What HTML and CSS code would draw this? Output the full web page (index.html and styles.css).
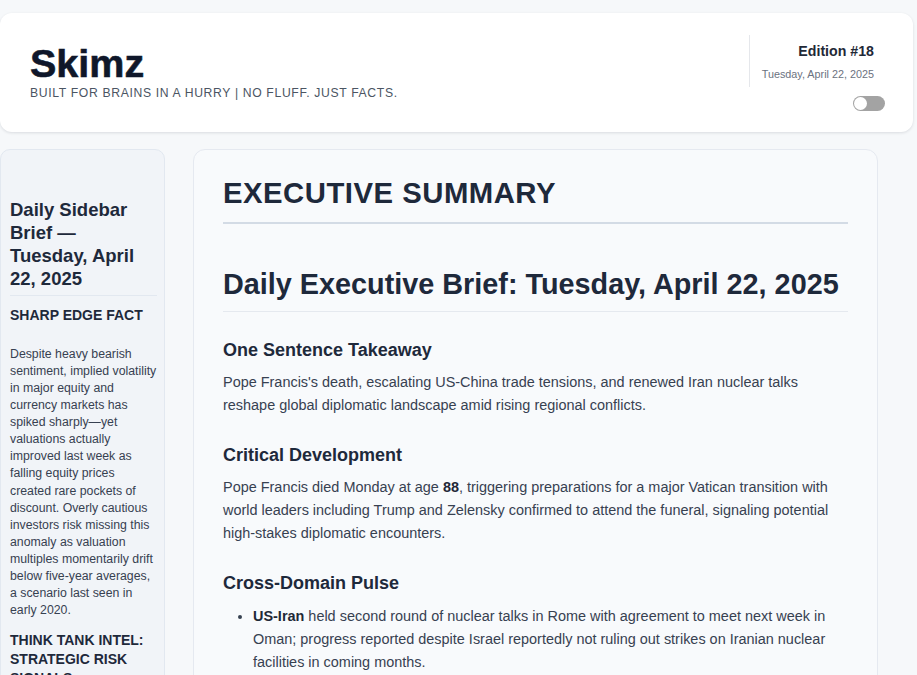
FILE: index.html
```html
<!DOCTYPE html>
<html lang="en">
<head>
    <meta charset="UTF-8">
    <meta name="viewport" content="width=device-width, initial-scale=1.0">
    <title>Skimz - Edition #18</title>
    <link rel="stylesheet" href="styles.css">
</head>
<body>
    <div class="page">
        <header class="masthead">
            <div class="brand">
                <h1 class="logo">Skimz</h1>
                <p class="tagline">Built for brains in a hurry | No fluff. Just facts.</p>
            </div>
            <div class="issue">
                <div class="issue-info">
                    <div class="edition">Edition #18</div>
                    <div class="issue-date">Tuesday, April 22, 2025</div>
                </div>
                <label class="toggle">
                    <input type="checkbox">
                    <span class="knob"></span>
                </label>
            </div>
        </header>

        <div class="layout">
            <aside class="sidebar">
                <h2 class="sidebar-title">Daily Sidebar Brief — Tuesday, April 22, 2025</h2>
                <h3 class="sidebar-label">Sharp Edge Fact</h3>
                <p class="sidebar-text">Despite heavy bearish sentiment, implied volatility in major equity and currency markets has spiked sharply—yet valuations actually improved last week as falling equity prices created rare pockets of discount. Overly cautious investors risk missing this anomaly as valuation multiples momentarily drift below five-year averages, a scenario last seen in early 2020.</p>
                <h3 class="sidebar-label">Think Tank Intel: Strategic Risk Signals</h3>
            </aside>

            <main class="summary">
                <h2 class="summary-title">Executive Summary</h2>
                <h1 class="brief-title">Daily Executive Brief: Tuesday, April 22, 2025</h1>

                <h3>One Sentence Takeaway</h3>
                <p>Pope Francis's death, escalating US-China trade tensions, and renewed Iran nuclear talks reshape global diplomatic landscape amid rising regional conflicts.</p>

                <h3>Critical Development</h3>
                <p>Pope Francis died Monday at age <strong>88</strong>, triggering preparations for a major Vatican transition with world leaders including Trump and Zelensky confirmed to attend the funeral, signaling potential high-stakes diplomatic encounters.</p>

                <h3>Cross-Domain Pulse</h3>
                <ul>
                    <li><strong>US-Iran</strong> held second round of nuclear talks in Rome with agreement to meet next week in Oman; progress reported despite Israel reportedly not ruling out strikes on Iranian nuclear facilities in coming months.</li>
                </ul>
            </main>
        </div>
    </div>
</body>
</html>
```

FILE: styles.css
```css
body {
    margin: 0;
    background-color: #f6f8fa;
    font-family: "Liberation Sans", Arial, sans-serif;
    color: #374151;
}
.page {
    padding: 13px 4px 0 0;
}
.masthead {
    height: 119px;
    box-sizing: border-box;
    padding: 0 28px 0 30px;
    background-color: #fff;
    border-radius: 12px;
    box-shadow: 0 1px 3px rgba(15, 23, 42, 0.12);
    display: flex;
    justify-content: space-between;
    align-items: center;
}
.logo {
    margin: 0;
    font-size: 39.5px;
    line-height: 1;
    font-weight: 700;
    color: #0f172a;
    -webkit-text-stroke: 0.6px #0f172a;
}
.tagline {
    margin: 3px 0 0;
    font-size: 12.2px;
    line-height: 15px;
    letter-spacing: 0.65px;
    text-transform: uppercase;
    color: #4b5563;
}
.issue {
    display: flex;
    flex-direction: column;
    align-items: flex-end;
    gap: 9px;
}
.issue-info {
    border-left: 1px solid #e5e7eb;
    padding: 8px 11px 6px 12px;
    text-align: right;
}
.edition {
    font-size: 14.2px;
    line-height: 17px;
    font-weight: 700;
    color: #1f2937;
    margin-bottom: 8px;
}
.issue-date {
    font-size: 10.8px;
    line-height: 13px;
    color: #6b7280;
}
.toggle {
    position: relative;
    display: block;
    width: 32px;
    height: 15px;
    border-radius: 8px;
    background-color: #a3a3a3;
}
.toggle input {
    display: none;
}
.toggle .knob {
    position: absolute;
    left: 1px;
    top: 1px;
    width: 13px;
    height: 13px;
    border-radius: 50%;
    background-color: #fff;
}
.layout {
    display: grid;
    grid-template-columns: 165px 685px;
    gap: 28px;
    margin-top: 17px;
    height: 540px;
}
.sidebar {
    box-sizing: border-box;
    background-color: #f1f4f8;
    border: 1px solid #e2e8f0;
    border-radius: 10px;
    padding: 48px 7px 0 9px;
    overflow: hidden;
}
.sidebar-title {
    margin: 0;
    padding-bottom: 5px;
    border-bottom: 1px solid #e2e8f0;
    font-size: 18.5px;
    line-height: 23px;
    color: #1e293b;
}
.sidebar-label {
    margin: 10px 0 0;
    font-size: 14px;
    line-height: 19px;
    text-transform: uppercase;
    color: #1e293b;
}
.sidebar-text {
    margin: 21px 0 12px;
    font-size: 12.3px;
    line-height: 17.07px;
    color: #374151;
}
.summary {
    box-sizing: border-box;
    background-color: #f8fafc;
    border: 1px solid #e5e9f0;
    border-radius: 12px;
    padding: 26px 29px 0;
    overflow: hidden;
}
.summary-title {
    margin: 0;
    padding-bottom: 12px;
    border-bottom: 2px solid #d3dbe5;
    font-size: 29.3px;
    line-height: 34px;
    letter-spacing: 0.5px;
    text-transform: uppercase;
    color: #1e293b;
}
.brief-title {
    margin: 43px 0 2px;
    padding-bottom: 10px;
    border-bottom: 1px solid #e5e9ef;
    font-size: 28.8px;
    line-height: 34px;
    color: #1e293b;
}
.summary h3 {
    margin: 27px 0 10px;
    font-size: 18px;
    line-height: 22px;
    color: #1e293b;
}
.summary p {
    margin: 0;
    font-size: 14.45px;
    line-height: 23px;
}
.summary ul {
    margin: 11px 0 0;
    padding-left: 30px;
    font-size: 14.45px;
    line-height: 23px;
}
strong {
    color: #1f2937;
}
```
